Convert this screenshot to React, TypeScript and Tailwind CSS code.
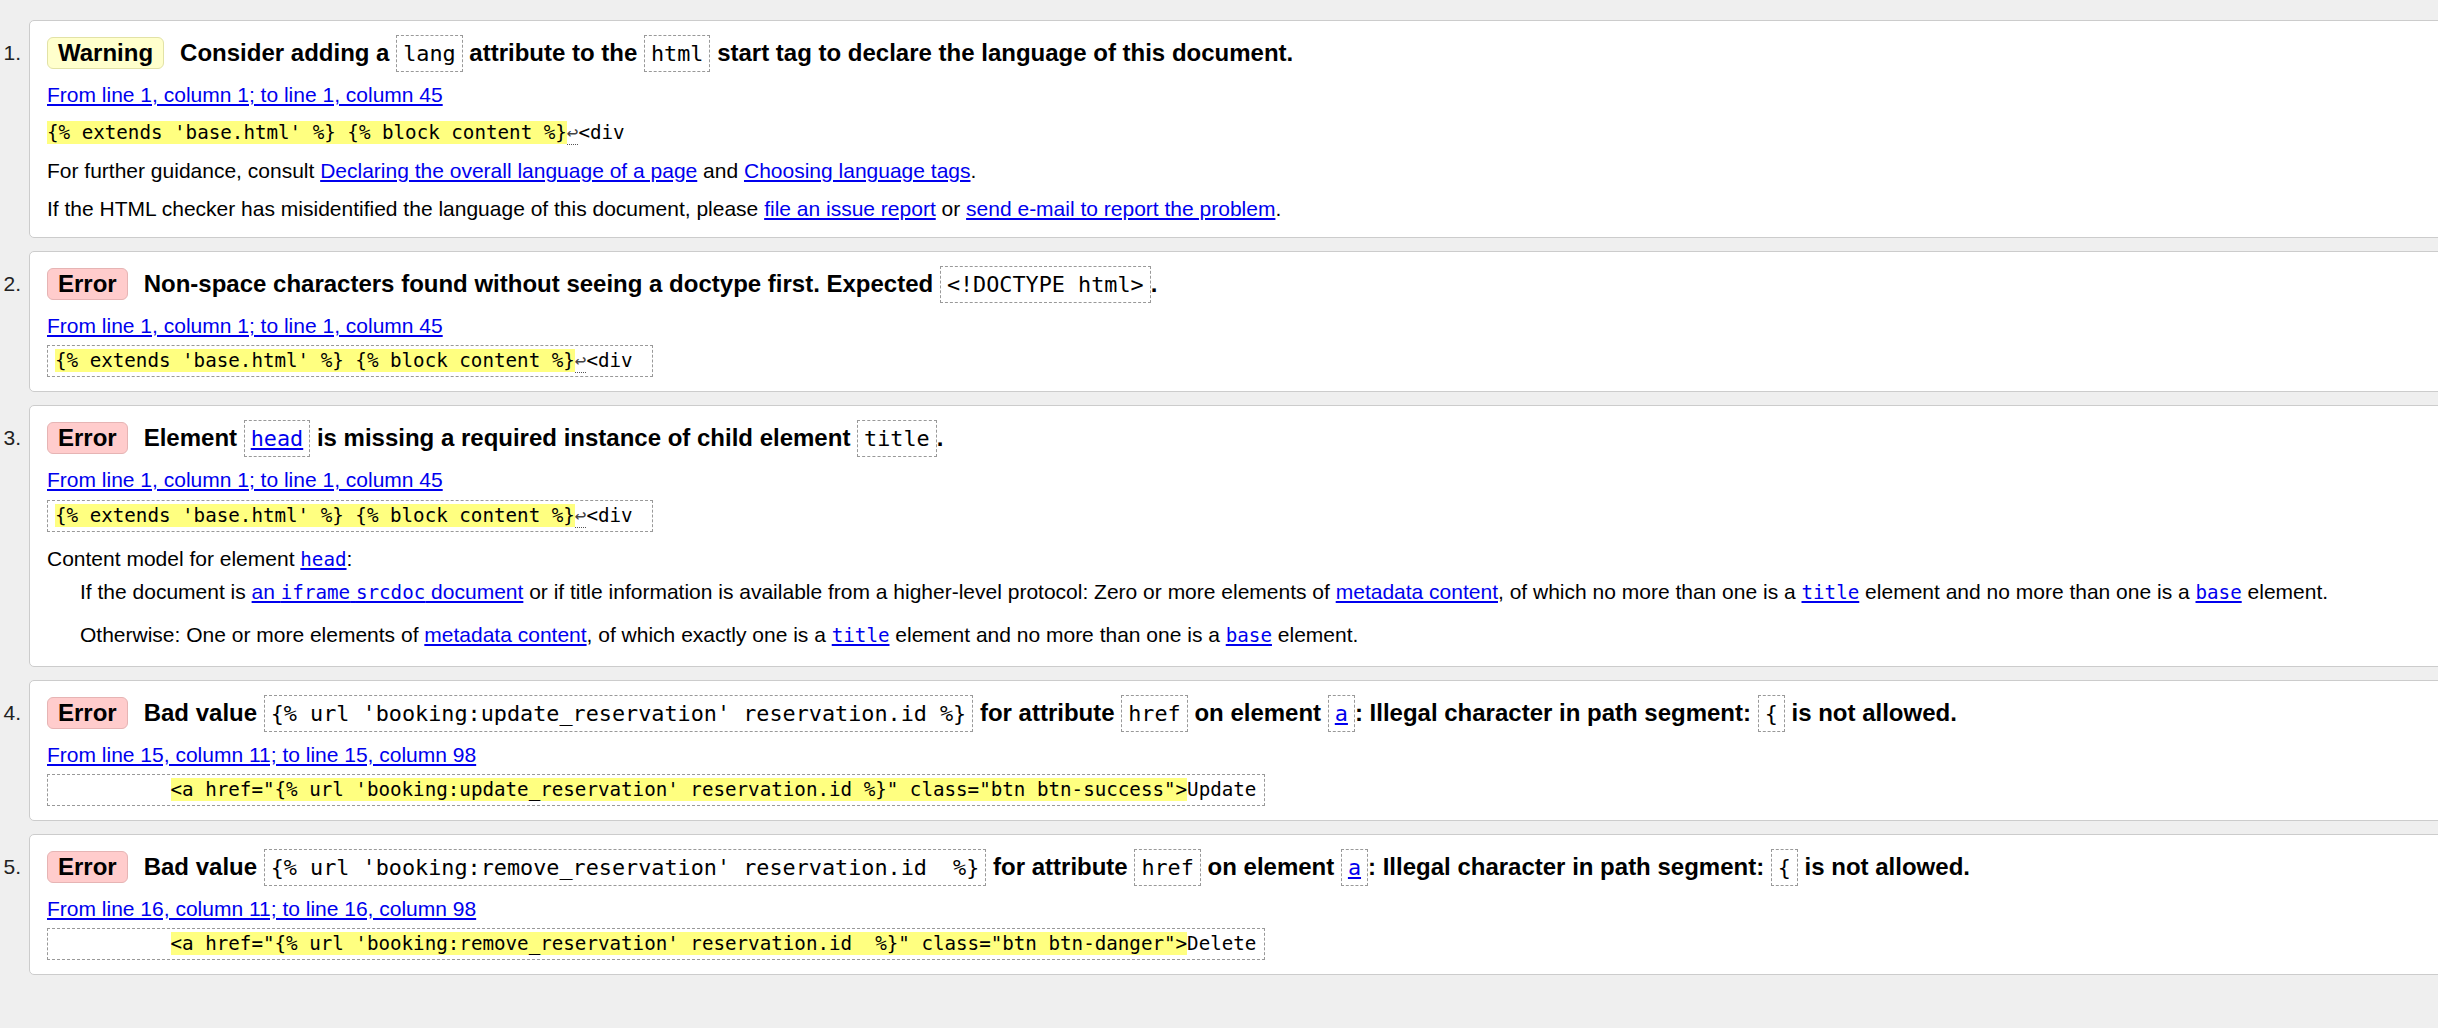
import React from "react";

// Nu HTML checker style result list

const MONO = "font-['DejaVu_Sans_Mono',monospace]";

const Badge = ({ kind }: { kind: "warning" | "error" }) => (
  <span
    className={`flex h-[32px] shrink-0 items-center rounded-[6px] border px-[10px] text-[24px] font-bold leading-[32px] ${
      kind === "warning"
        ? "border-[#e2e2a6] bg-[#ffffcc]"
        : "border-[#e6b4b4] bg-[#ffcccc]"
    }`}
  >
    {kind === "warning" ? "Warning" : "Error"}
  </span>
);

const A = ({ children }: { children: React.ReactNode }) => (
  <a className="cursor-pointer text-[#0000ee] underline">{children}</a>
);

// boxed code inside the message title
const Tag = ({ children, link }: { children: React.ReactNode; link?: boolean }) => (
  <span
    className={`${MONO} border border-dashed border-[#999] px-[6px] py-[5px] text-[21.8px] font-normal whitespace-pre`}
  >
    {link ? <A>{children}</A> : children}
  </span>
);

const C = ({ children }: { children: React.ReactNode }) => (
  <code className={`${MONO} text-[19.2px]`}>{children}</code>
);

const Mark = () => (
  <span className="border-b border-dotted border-[#555] text-[#444]">↩</span>
);

const Hl = ({ children }: { children: React.ReactNode }) => (
  <span className="bg-[#ffff80]">{children}</span>
);

const Extract = ({ children }: { children: React.ReactNode }) => (
  <div>
    <div
      className={`${MONO} inline-block border border-dashed border-[#999] pl-[7px] pr-[8px] text-[19.2px] leading-[30px] whitespace-pre`}
    >
      {children}
    </div>
  </div>
);

const Item = ({
  n,
  kind,
  title,
  location,
  pb = "pb-[14px]",
  children,
}: {
  n: number;
  kind: "warning" | "error";
  title: React.ReactNode;
  location: string;
  pb?: string;
  children: React.ReactNode;
}) => (
  <li className="mb-[13px] mr-[-40px] flex">
    <div className="mt-[17px] w-[29px] shrink-0 pr-[8px] text-right text-[21px] leading-[32px] text-[#222]">
      {n}.
    </div>
    <div
      className={`flex-1 rounded-[5px] border border-[#cccccc] bg-white pl-[17px] pt-[16px] ${pb}`}
    >
      <div className="flex h-[32px] items-center">
        <Badge kind={kind} />
        <span className="ml-[16px] whitespace-nowrap text-[24px] font-bold leading-[32px]">
          {title}
        </span>
      </div>
      <p className="mt-[7px] text-[21px] leading-[38px]">
        <A>{location}</A>
      </p>
      {children}
    </div>
  </li>
);

const App = () => {
  return (
    <div className="h-[1028px] w-full overflow-hidden bg-[#efefef] pt-[20px] font-['Liberation_Sans',Arial,sans-serif] text-black">
      <ol className="list-none">
        <Item
          n={1}
          kind="warning"
          pb="pb-[9px]"
          location="From line 1, column 1; to line 1, column 45"
          title={
            <>
              Consider adding a <Tag>lang</Tag> attribute to the <Tag>html</Tag> start tag to
              declare the language of this document.
            </>
          }
        >
          <p className={`${MONO} text-[19.2px] leading-[38px] whitespace-pre`}>
            <Hl>{"{% extends 'base.html' %} {% block content %}"}</Hl>
            <Mark />
            {"<div"}
          </p>
          <p className="text-[21px] leading-[38px]">
            For further guidance, consult <A>Declaring the overall language of a page</A> and{" "}
            <A>Choosing language tags</A>.
          </p>
          <p className="text-[21px] leading-[38px]">
            If the HTML checker has misidentified the language of this document, please{" "}
            <A>file an issue report</A> or <A>send e-mail to report the problem</A>.
          </p>
        </Item>

        <Item
          n={2}
          kind="error"
          location="From line 1, column 1; to line 1, column 45"
          title={
            <>
              Non-space characters found without seeing a doctype first. Expected{" "}
              <Tag>{"<!DOCTYPE html>"}</Tag>.
            </>
          }
        >
          <Extract>
            <Hl>{"{% extends 'base.html' %} {% block content %}"}</Hl>
            <Mark />
            {"<div "}
          </Extract>
        </Item>

        <Item
          n={3}
          kind="error"
          location="From line 1, column 1; to line 1, column 45"
          title={
            <>
              Element <Tag link>head</Tag> is missing a required instance of child element{" "}
              <Tag>title</Tag>.
            </>
          }
        >
          <div className="mb-[11px] mt-[1px]">
            <Extract>
              <Hl>{"{% extends 'base.html' %} {% block content %}"}</Hl>
              <Mark />
              {"<div "}
            </Extract>
          </div>
          <p className="text-[21px] leading-[32px]">
            Content model for element{" "}
            <A>
              <C>head</C>
            </A>
            :
          </p>
          <p className="pl-[33px] text-[21px] leading-[32px]">
            If the document is{" "}
            <A>
              an <C>iframe</C> <C>srcdoc</C> document
            </A>{" "}
            or if title information is available from a higher-level protocol: Zero or more
            elements of <A>metadata content</A>, of which no more than one is a{" "}
            <A>
              <C>title</C>
            </A>{" "}
            element and no more than one is a{" "}
            <A>
              <C>base</C>
            </A>{" "}
            element.
          </p>
          <p className="mt-[10px] pl-[33px] text-[21px] leading-[32px]">
            Otherwise: One or more elements of <A>metadata content</A>, of which exactly one is a{" "}
            <A>
              <C>title</C>
            </A>{" "}
            element and no more than one is a{" "}
            <A>
              <C>base</C>
            </A>{" "}
            element.
          </p>
        </Item>

        <Item
          n={4}
          kind="error"
          location="From line 15, column 11; to line 15, column 98"
          title={
            <>
              Bad value <Tag>{"{% url 'booking:update_reservation' reservation.id %}"}</Tag> for
              attribute <Tag>href</Tag> on element <Tag link>a</Tag>: Illegal character in path
              segment: <Tag>{"{"}</Tag> is not allowed.
            </>
          }
        >
          <Extract>
            {"          "}
            <Hl>
              {
                "<a href=\"{% url 'booking:update_reservation' reservation.id %}\" class=\"btn btn-success\">"
              }
            </Hl>
            Update
          </Extract>
        </Item>

        <Item
          n={5}
          kind="error"
          location="From line 16, column 11; to line 16, column 98"
          title={
            <>
              Bad value <Tag>{"{% url 'booking:remove_reservation' reservation.id  %}"}</Tag> for
              attribute <Tag>href</Tag> on element <Tag link>a</Tag>: Illegal character in path
              segment: <Tag>{"{"}</Tag> is not allowed.
            </>
          }
        >
          <Extract>
            {"          "}
            <Hl>
              {
                "<a href=\"{% url 'booking:remove_reservation' reservation.id  %}\" class=\"btn btn-danger\">"
              }
            </Hl>
            Delete
          </Extract>
        </Item>
      </ol>
    </div>
  );
};

export default App;
